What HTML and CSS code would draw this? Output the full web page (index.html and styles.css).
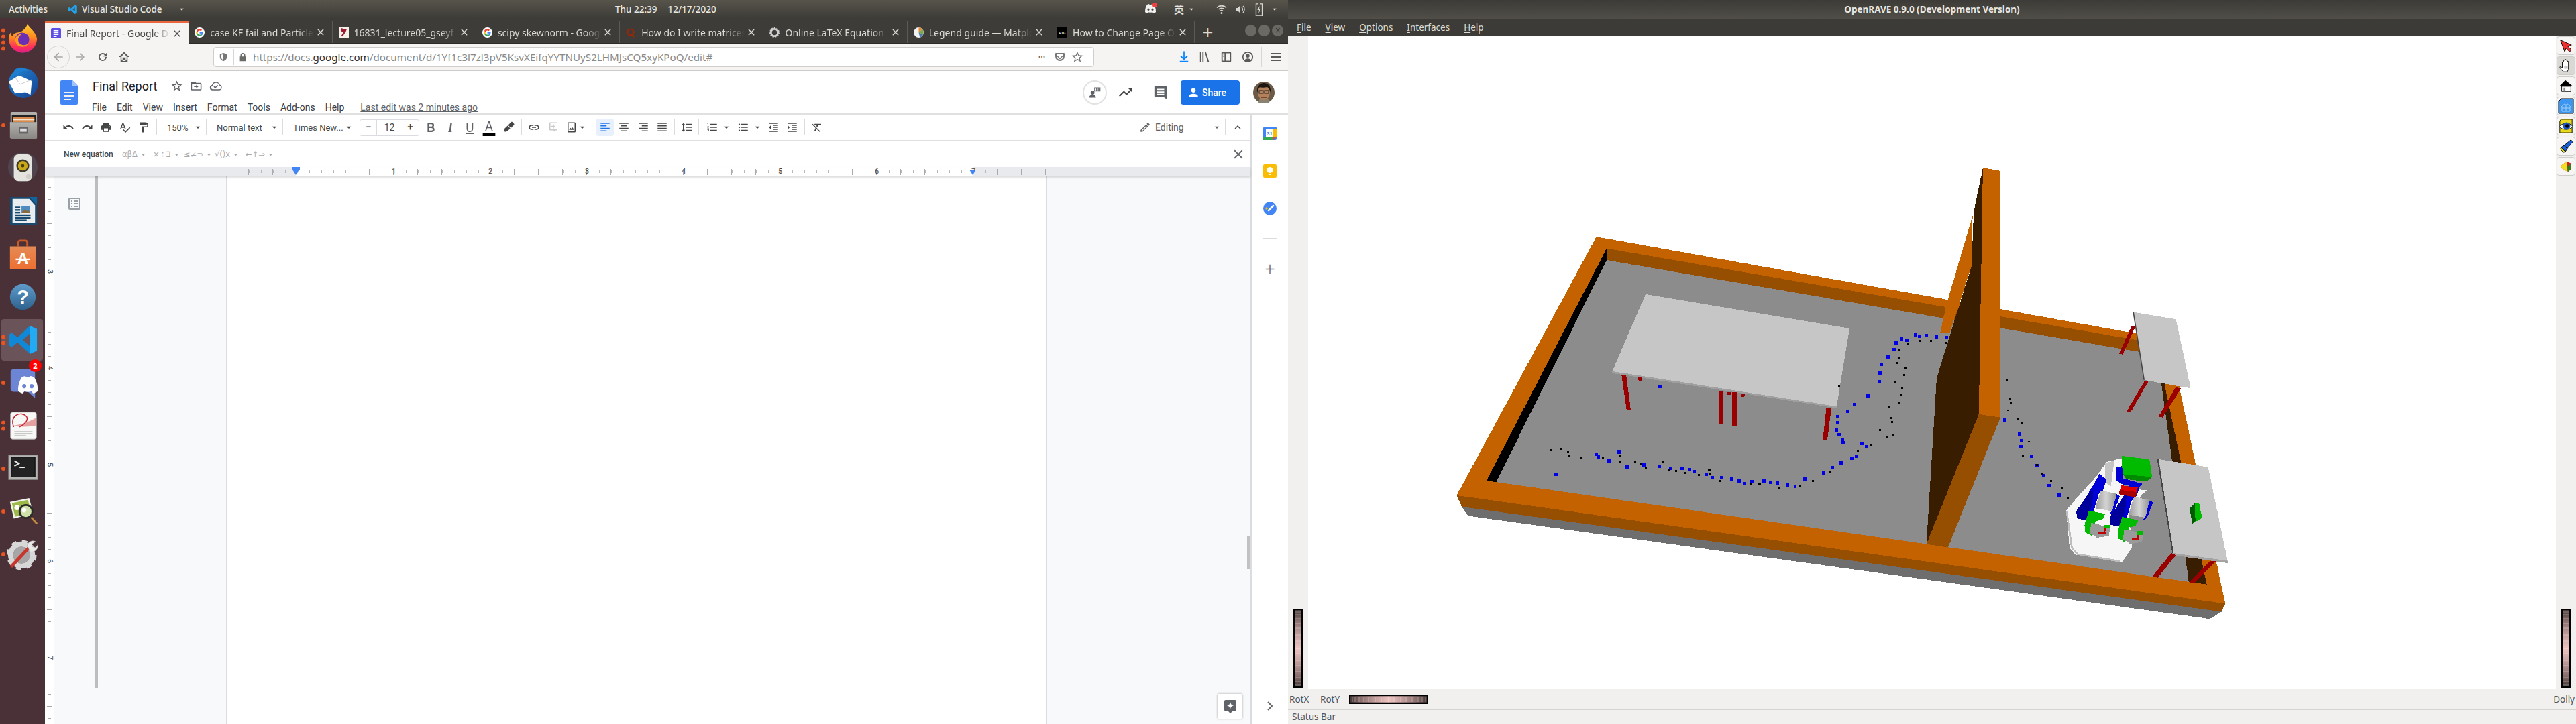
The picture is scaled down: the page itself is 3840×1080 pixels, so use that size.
FILE: index.html
```html
<!DOCTYPE html>
<html lang="en">
<head>
<meta charset="utf-8">
<title>Desktop</title>
<link rel="stylesheet" href="styles.css">
</head>
<body>
<svg class="defs" aria-hidden="true">
  <defs>
    <linearGradient id="wg" x1="0" y1="0" x2="0" y2="1"><stop offset="0" stop-color="#463836"/><stop offset=".14" stop-color="#8a6f6d"/><stop offset=".32" stop-color="#c29e9c"/><stop offset=".5" stop-color="#eec4c1"/><stop offset=".68" stop-color="#c29e9c"/><stop offset=".86" stop-color="#8a6f6d"/><stop offset="1" stop-color="#463836"/></linearGradient>
    <linearGradient id="ffg" x1="0" y1="0" x2="0" y2="1"><stop offset="0" stop-color="#ffd22e"/><stop offset=".45" stop-color="#ff8a1f"/><stop offset=".8" stop-color="#ff2f5c"/><stop offset="1" stop-color="#d81f8a"/></linearGradient>
    <linearGradient id="tbg" x1="0" y1="0" x2="1" y2="1"><stop offset="0" stop-color="#1f8ad8"/><stop offset="1" stop-color="#173f8f"/></linearGradient>
    <linearGradient id="cab" x1="0" y1="0" x2="0" y2="1"><stop offset="0" stop-color="#b4b2ae"/><stop offset="1" stop-color="#8a8885"/></linearGradient>
    <linearGradient id="bag" x1="0" y1="0" x2="0" y2="1"><stop offset="0" stop-color="#e58a55"/><stop offset="1" stop-color="#ed6f30"/></linearGradient>
    <linearGradient id="hlp" x1="0" y1="0" x2="0" y2="1"><stop offset="0" stop-color="#5f9ac9"/><stop offset="1" stop-color="#2d628e"/></linearGradient>
    <linearGradient id="cyl" x1="0" y1="0" x2="1" y2="0"><stop offset="0" stop-color="#9a9a9a"/><stop offset=".5" stop-color="#d4d4d4"/><stop offset="1" stop-color="#8f8f8f"/></linearGradient>
    <symbol id="x" viewBox="0 0 24 24"><path d="M19 6.41L17.59 5 12 10.59 6.41 5 5 6.41 10.59 12 5 17.59 6.41 19 12 13.41 17.59 19 19 17.59 13.41 12z"/></symbol>
    <symbol id="caret" viewBox="0 0 24 24"><path d="M7 10l5 5 5-5z"/></symbol>
    <symbol id="undo" viewBox="0 0 24 24"><path d="M12.5 8c-2.65 0-5.05.99-6.9 2.6L2 7v9h9l-3.62-3.62c1.39-1.16 3.16-1.88 5.12-1.88 3.54 0 6.55 2.31 7.6 5.5l2.37-.78C21.08 11.03 17.15 8 12.5 8z"/></symbol>
    <symbol id="redo" viewBox="0 0 24 24"><path d="M18.4 10.6C16.55 8.99 14.15 8 11.5 8c-4.65 0-8.58 3.03-9.96 7.22L3.9 16c1.05-3.19 4.05-5.5 7.6-5.5 1.95 0 3.73.72 5.12 1.88L13 16h9V7l-3.6 3.6z"/></symbol>
    <symbol id="print" viewBox="0 0 24 24"><path d="M19 8H5c-1.66 0-3 1.34-3 3v6h4v4h12v-4h4v-6c0-1.66-1.34-3-3-3zm-3 11H8v-5h8v5zm3-7c-.55 0-1-.45-1-1s.45-1 1-1 1 .45 1 1-.45 1-1 1zm-1-9H6v4h12V3z"/></symbol>
    <symbol id="spell" viewBox="0 0 24 24"><path d="M12.45 16h2.09L9.43 3H7.57L2.46 16h2.09l1.12-3h5.64l1.14 3zm-6.02-5L8.5 5.48 10.57 11H6.43zm15.16.59l-8.09 8.09L9.83 16l-1.41 1.41 5.09 5.09L23 13l-1.41-1.41z"/></symbol>
    <symbol id="paint" viewBox="0 0 24 24"><path d="M18 4V3c0-.55-.45-1-1-1H5c-.55 0-1 .45-1 1v4c0 .55.45 1 1 1h12c.55 0 1-.45 1-1V6h1v4H9v11c0 .55.45 1 1 1h2c.55 0 1-.45 1-1v-9h8V4h-3z"/></symbol>
    <symbol id="hl" viewBox="0 0 24 24"><path d="M18.500 1.150c-.53 0-1.040.19-1.430.58l-5.810 5.820 5.650 5.650 5.820-5.810c.77-.78.77-2.040 0-2.830l-2.840-2.830c-.39-.39-.89-.58-1.390-.58zM10.300 8.500l-5.960 5.960c-.39.39-.39 1.020 0 1.410L1.500 19.500 7 21l1.150-1.140c.39.39 1.020.39 1.410 0l5.960-5.960z"/></symbol>
    <symbol id="link" viewBox="0 0 24 24"><path d="M3.9 12c0-1.71 1.39-3.1 3.1-3.1h4V7H7c-2.76 0-5 2.24-5 5s2.24 5 5 5h4v-1.9H7c-1.71 0-3.1-1.39-3.1-3.1zM8 13h8v-2H8v2zm9-6h-4v1.9h4c1.71 0 3.1 1.39 3.1 3.1s-1.39 3.1-3.1 3.1h-4V17h4c2.76 0 5-2.24 5-5s-2.24-5-5-5z"/></symbol>
    <symbol id="addc" viewBox="0 0 24 24"><path d="M5 2h14a1 1 0 011 1v14a1 1 0 01-1 1h-3v4l-4-4H5a1 1 0 01-1-1V3a1 1 0 011-1zm1 2v12h14V4zm5 2h2v3h3v2h-3v3h-2v-3H8V9h3z" fill-rule="evenodd"/></symbol>
    <symbol id="image" viewBox="0 0 24 24"><path d="M6 2h12a2 2 0 012 2v16a2 2 0 01-2 2H6a2 2 0 01-2-2V4a2 2 0 012-2zm0 2v16h12V4zm1 13l3-4 2 2 2-3 3 5z" fill-rule="evenodd"/></symbol>
    <symbol id="al" viewBox="0 0 24 24"><path d="M3 3h18v2H3zM3 8h12v2H3zM3 13h18v2H3zM3 18h12v2H3z"/></symbol>
    <symbol id="ac" viewBox="0 0 24 24"><path d="M3 3h18v2H3zM6 8h12v2H6zM3 13h18v2H3zM6 18h12v2H6z"/></symbol>
    <symbol id="ar" viewBox="0 0 24 24"><path d="M3 3h18v2H3zM9 8h12v2H9zM3 13h18v2H3zM9 18h12v2H9z"/></symbol>
    <symbol id="aj" viewBox="0 0 24 24"><path d="M3 3h18v2H3zM3 8h18v2H3zM3 13h18v2H3zM3 18h18v2H3z"/></symbol>
    <symbol id="ls" viewBox="0 0 24 24"><path d="M6 7h2.5L5 3.5 1.5 7H4v10H1.5L5 20.5 8.5 17H6V7zm4-2v2h12V5H10zm0 14h12v-2H10v2zm0-6h12v-2H10v2z"/></symbol>
    <symbol id="nl" viewBox="0 0 24 24"><path d="M2 17h2v.5H3v1h1v.5H2v1h3v-4H2v1zm1-9h1V4H2v1h1v3zm-1 3h1.8L2 13.1v.9h3v-1H3.2L5 10.9V10H2v1zm5-6v2h14V5H7zm0 14h14v-2H7v2zm0-6h14v-2H7v2z"/></symbol>
    <symbol id="bl" viewBox="0 0 24 24"><path d="M4 10.5c-.83 0-1.5.67-1.5 1.5s.67 1.5 1.5 1.5 1.5-.67 1.5-1.5-.67-1.5-1.5-1.5zm0-6c-.83 0-1.5.67-1.5 1.5S3.17 7.5 4 7.5 5.5 6.83 5.5 6 4.83 4.5 4 4.5zm0 12c-.83 0-1.5.68-1.5 1.5s.68 1.5 1.5 1.5 1.5-.68 1.5-1.5-.67-1.5-1.5-1.5zM7 19h14v-2H7v2zm0-6h14v-2H7v2zm0-8v2h14V5H7z"/></symbol>
    <symbol id="ind" viewBox="0 0 24 24"><path d="M11 17h10v-2H11v2zm-8-5l4 4V8l-4 4zm0 9h18v-2H3v2zM3 3v2h18V3H3zm8 6h10V7H11v2zm0 4h10v-2H11v2z"/></symbol>
    <symbol id="inc" viewBox="0 0 24 24"><path d="M3 21h18v-2H3v2zM3 8v8l4-4-4-4zm8 9h10v-2H11v2zM3 3v2h18V3H3zm8 6h10V7H11v2zm0 4h10v-2H11v2z"/></symbol>
    <symbol id="clr" viewBox="0 0 24 24"><path d="M3.27 5L2 6.27l6.97 6.97L6.5 19h3l1.57-3.66L16.73 21 18 19.73 3.55 5.27 3.27 5zM6 5v.18L8.82 8h2.4l-.72 1.68 2.1 2.1L14.21 8H20V5H6z"/></symbol>
    <symbol id="pencil" viewBox="0 0 24 24"><path d="M3 17.25V21h3.75L17.81 9.94l-3.75-3.75L3 17.25zm2.1 2v-1.1l9-9 1.1 1.1-9 9zM20.71 7.04c.39-.39.39-1.02 0-1.41l-2.34-2.34c-.39-.39-1.02-.39-1.41 0l-1.83 1.83 3.75 3.75 1.83-1.83z" fill-rule="evenodd"/></symbol>
    <symbol id="up" viewBox="0 0 24 24"><path d="M12 8l-6 6 1.41 1.41L12 10.83l4.59 4.58L18 14z"/></symbol>
    <symbol id="star" viewBox="0 0 24 24"><path d="M22 9.24l-7.19-.62L12 2 9.19 8.63 2 9.24l5.46 4.73L5.82 21 12 17.27 18.18 21l-1.63-7.03L22 9.24zM12 15.4l-3.76 2.27 1-4.28-3.32-2.88 4.38-.38L12 6.1l1.71 4.04 4.38.38-3.32 2.88 1 4.28L12 15.4z"/></symbol>
    <symbol id="person" viewBox="0 0 24 24"><path d="M12 12c2.21 0 4-1.79 4-4s-1.79-4-4-4-4 1.79-4 4 1.79 4 4 4zm0 2c-2.67 0-8 1.34-8 4v2h16v-2c0-2.66-5.33-4-8-4z"/></symbol>
    <symbol id="trend" viewBox="0 0 24 24"><path d="M16 6l2.29 2.29-4.88 4.88-4-4L2 16.59 3.41 18l6-6 4 4 6.3-6.29L22 12V6z"/></symbol>
    <symbol id="google" viewBox="0 0 24 24"><circle cx="12" cy="12" r="12" fill="#fff"/><path d="M12 7.2a4.8 4.8 0 013.3 1.3l2.5-2.5A8.3 8.3 0 0012 3.7a8.3 8.3 0 00-7.4 4.6l2.9 2.2A5 5 0 0112 7.2z" fill="#ea4335"/><path d="M4.6 8.3a8.3 8.3 0 000 7.4l2.9-2.2a5 5 0 010-3z" fill="#fbbc05"/><path d="M12 20.3a8 8 0 005.5-2l-2.7-2.1a5 5 0 01-7.3-2.7l-2.9 2.2a8.3 8.3 0 007.4 4.6z" fill="#34a853"/><path d="M20.1 10.5H12v3.4h4.7a4 4 0 01-1.9 2.3l2.7 2.1c1.6-1.5 2.8-4.400 2.600-7.800z" fill="#4285f4"/></symbol>
    <symbol id="discord" viewBox="0 0 24 24"><path d="M7 5c2-1 3-1 3-1l.5 1h3L14 4s1 0 3 1c2 3 3 6 3 11-1.500 1.500-3.500 2-4 2l-1-1.500c1-.3 1.500-.8 1.500-.8-2.500 1.500-6.500 1.500-9 0 0 0 .5.500 1.500.8L8 18c-.5 0-2.500-.5-4-2 0-5 1-8 3-11zm2 5.500a1.600 1.700 0 100 3.400 1.600 1.700 0 000-3.400zm6 0a1.600 1.700 0 100 3.400 1.600 1.700 0 000-3.400z" fill-rule="evenodd"/></symbol>
    <symbol id="wheel" viewBox="0 0 14 118" preserveAspectRatio="none"><rect width="14" height="118" fill="#000"/><rect x="2" y="2" width="10" height="114" fill="url(#wg)"/><path d="M3 5h8M3 9h8M3 15h8M3 22h8M3 29h8M3 39h8M3 48h8M3 59h8M3 67h8M3 77h8M3 85h8M3 94h8M3 103h8M3 109h8M3 114h8" stroke="#fff" stroke-opacity=".35" stroke-width="1" fill="none"/><path d="M2.500 2v114M11.500 2v114" stroke="#000" stroke-opacity=".25" fill="none"/></symbol>
  </defs>
</svg>

<section class="screen">
  <header class="panel">
    <span class="p-activities">Activities</span>
    <svg class="p-vs" viewBox="0 0 24 24"><path d="M17 1l5 2.500v17L17 23 7.500 14 3.500 17 1.500 16v-8l2-1 4 3L17 1zm0 6.500L11.500 12l5.500 4.500z" fill="#23a3ee" fill-rule="evenodd"/></svg>
    <span class="p-app">Visual Studio Code</span>
    <svg class="ic14 p-c"><use href="#caret"/></svg>
    <span class="p-clock">Thu 22:39</span>
    <span class="p-date">12/17/2020</span>
    <span class="p-discord"><svg class="ic24"><use href="#discord"/></svg><i class="p-red"></i></span>
    <span class="p-ime">英</span>
    <svg class="ic14 p-c"><use href="#caret"/></svg>
    <svg class="p-tray p-wifi" viewBox="0 0 16 16"><path d="M1 5.500a10 10 0 0114 0M3.500 8a6.500 6.500 0 019 0M6 10.500a3 3 0 014 0" fill="none" stroke="currentColor" stroke-width="1.600"/><circle cx="8" cy="13.500" r="1.500" fill="currentColor"/></svg>
    <svg class="p-tray p-vol" viewBox="0 0 16 16"><path d="M1 6h3l4-4v12l-4-4H1z" fill="currentColor"/><path d="M10 5a4 4 0 010 6M12 3a7 7 0 010 10" fill="none" stroke="currentColor" stroke-width="1.400"/></svg>
    <svg class="p-tray p-bat" viewBox="0 0 16 22"><path d="M6 0h4v2h3v20H3V2h3z" fill="none" stroke="currentColor" stroke-width="1.500"/><path d="M9 5l-4 7h3l-1 6 4-8H8z" fill="currentColor"/></svg>
    <svg class="ic14 p-c"><use href="#caret"/></svg>
  </header>

  <div class="desk">
    <nav class="dock">
      <div class="app"><i class="dots"><b></b><b></b><b></b><b></b></i>
        <svg viewBox="0 0 48 48"><path d="M31 0c3 6 12 10 15 22a22 22 0 11-44 1c0-3 1-7 3-10 0 3 2 5 3 6 2-6 8-6 13-7 3-2 9-6 10-12z" fill="url(#ffg)"/><circle cx="23" cy="24" r="11" fill="#6a2fb5"/><path d="M12 22c3-5 7-7 13-8-6 3-9 7-8 12 1 6 10 9 16 4-5 7-13 6-18 2-2-2-3-6-3-10z" fill="#ff9c1f"/></svg></div>
      <div class="app"><svg viewBox="0 0 48 48"><circle cx="25" cy="25" r="23" fill="url(#tbg)"/><path d="M12 4c6-5 16-4 21 3-6-2-13-1-16 5l-7 1c-1-3 0-7 2-9z" fill="#1c7fd1"/><path d="M2 23l16-10 20 9-2 21-8-4-16 2z" fill="#fff"/><path d="M12 16l8 11 17-7" fill="none" stroke="#c9c9c9"/></svg></div>
      <div class="app"><i class="dots"><b></b></i>
        <svg viewBox="0 0 48 48"><rect x="5" y="3" width="41" height="42" rx="2" fill="url(#cab)"/><rect x="7" y="8" width="37" height="16" fill="#222"/><rect x="9" y="11" width="33" height="8" fill="#d9894c"/><rect x="9" y="14" width="33" height="2" fill="#f4e6d3"/><rect x="4" y="19" width="42" height="25" fill="url(#cab)"/><rect x="18" y="27" width="14" height="10" rx="1" fill="#666"/><rect x="20" y="29" width="10" height="5" fill="#ddd"/></svg></div>
      <div class="app"><svg viewBox="0 0 48 48"><circle cx="24" cy="22" r="23" fill="#5b6a7d" opacity=".35"/><rect x="10" y="2" width="28" height="42" rx="7" fill="#e4e3dd"/><circle cx="24" cy="20" r="10" fill="#3d3a2c"/><circle cx="24" cy="20" r="7.500" fill="#c9a818"/><circle cx="24" cy="20" r="2.500" fill="#4a3f10"/><circle cx="33" cy="37" r="4" fill="#cfcfc8"/></svg></div>
      <div class="app"><svg viewBox="0 0 48 48"><path d="M6 2h29l11 11v31a2 2 0 01-2 2H6a2 2 0 01-2-2V4a2 2 0 012-2z" fill="#184a6f"/><path d="M8 5h26l9 10v27H8z" fill="#e9edef"/><path d="M34 2h12v12z" fill="#0e66a0"/><rect x="12" y="17" width="8" height="2.500" fill="#184a6f"/><rect x="12" y="21" width="8" height="2.500" fill="#184a6f"/><rect x="12" y="25" width="8" height="2.500" fill="#184a6f"/><rect x="22" y="16" width="13" height="10" fill="#4d8bc0"/><path d="M22 26l5-5 3 3 2-2 3 4z" fill="#8a6a3a"/><rect x="12" y="29" width="24" height="2.500" fill="#184a6f"/><rect x="12" y="33" width="24" height="2.500" fill="#184a6f"/><rect x="12" y="37" width="18" height="2.500" fill="#184a6f"/></svg></div>
      <div class="app"><svg viewBox="0 0 48 48"><path d="M17 12V6a3 3 0 013-3h8a3 3 0 013 3v6" fill="none" stroke="#c95a26" stroke-width="3"/><path d="M4 12h40v36H4z" fill="url(#bag)"/><text x="24" y="40" class="ap-a">A</text><rect x="13" y="31" width="22" height="2.500" fill="#fff"/></svg></div>
      <div class="app"><svg viewBox="0 0 48 48"><circle cx="24" cy="24" r="20" fill="url(#hlp)"/><text x="24" y="34" class="ap-q">?</text></svg></div>
      <div class="app app-on"><i class="dots"><b></b><b></b></i>
        <svg viewBox="0 0 48 48"><path d="M36 2l11 5v34l-11 5L17 28 8 35l-4-2V15l4-2 9 7zM36 14L25 24l11 10z" fill="#0f88d8" fill-rule="evenodd"/><path d="M36 2l11 5v34l-11 5z" fill="#22aaf5"/></svg></div>
      <div class="app"><i class="dots"><b></b></i>
        <svg viewBox="0 0 48 48"><path d="M9 3h30a4 4 0 014 4v41l-11-10H9a4 4 0 01-4-4V7a4 4 0 014-4z" fill="#6d85d5"/><svg x="9" y="6" width="32" height="32" class="ap-w"><use href="#discord"/></svg></svg><b class="badge">2</b></div>
      <div class="app"><i class="dots"><b></b><b></b></i>
        <svg viewBox="0 0 48 48"><rect x="5" y="3" width="40" height="42" rx="3" fill="#f7f7f6" stroke="#bbb"/><path d="M8 24c10-1 24-5 36-12v12c-10 2-26 2-36 0z" fill="#e5a0a0"/><path d="M10 26C2 8 22 0 30 10c3 5-3 12-11 16" fill="none" stroke="#c8202a" stroke-width="1.500"/><path d="M11 33h28M11 36h28M11 39h18" stroke="#c4c4c4"/></svg></div>
      <div class="app"><i class="dots"><b></b></i>
        <svg viewBox="0 0 48 48"><rect x="2" y="3" width="45" height="38" fill="#b5b5b3" stroke="#8c8c8a"/><rect x="6" y="6" width="37" height="31" fill="#222" stroke="#000"/><path d="M11 12l7 4-7 4" fill="none" stroke="#eee" stroke-width="2"/><rect x="19" y="21" width="8" height="2" fill="#eee"/></svg></div>
      <div class="app"><i class="dots"><b></b></i>
        <svg viewBox="0 0 48 48"><path d="M4 9l30-6 6 24-30 8z" fill="#f4f4ee"/><path d="M7 11l25-5 5 20-25 6z" fill="#9cb94a"/><circle cx="15" cy="18" r="4" fill="#fff"/><circle cx="29" cy="24" r="10" fill="#cfe0a8" stroke="#2b2b2b" stroke-width="3"/><circle cx="26" cy="22" r="3.500" fill="#fff"/><path d="M37 33l9 10" stroke="#c28a3e" stroke-width="3"/></svg></div>
      <div class="app"><i class="dots"><b></b></i>
        <svg viewBox="0 0 48 48"><circle cx="22" cy="25" r="13" fill="#a6a6a6"/><circle cx="22" cy="25" r="17" fill="none" stroke="#d7d7d7" stroke-width="8"/><circle cx="22" cy="25" r="21" fill="none" stroke="#d7d7d7" stroke-width="5" stroke-dasharray="8 8.500"/><path d="M7 42l26-28" stroke="#c9362c" stroke-width="5" stroke-linecap="round"/><path d="M31 10c1-6 8-9 13-6l-6 4 1 4 5 1 3-4c2 6-5 13-12 11z" fill="#e8e8e8" stroke="#888" stroke-width=".5"/></svg></div>
    </nav>

    <main class="ff">
      <div class="tabs">
        <div class="tab tab-on"><svg class="fav" viewBox="0 0 16 16"><rect width="16" height="16" rx="2" fill="#5b4fe8"/><path d="M4 4h8M4 7h8M4 10h8M4 13h5" stroke="#fff" stroke-width="1.500"/></svg><span class="t">Final Report - Google D</span><svg class="cl"><use href="#x"/></svg></div>
        <div class="tab"><svg class="fav"><use href="#google"/></svg><span class="t">case KF fail and Particle</span><svg class="cl"><use href="#x"/></svg></div>
        <div class="tab"><svg class="fav" viewBox="0 0 16 16"><rect width="16" height="16" fill="#f4f1ea"/><path d="M4 1l6 2 3-1-2 5-5 7-2-1 3-5-4-3z" fill="#9e1b32"/></svg><span class="t">16831_lecture05_gseyf</span><svg class="cl"><use href="#x"/></svg></div>
        <div class="tab"><svg class="fav"><use href="#google"/></svg><span class="t">scipy skewnorm - Googl</span><svg class="cl"><use href="#x"/></svg></div>
        <div class="tab"><svg class="fav" viewBox="0 0 16 16"><circle cx="7.500" cy="7.500" r="5" fill="none" stroke="#a82400" stroke-width="2"/><path d="M9 10l4 5" stroke="#a82400" stroke-width="2"/></svg><span class="t">How do I write matrices</span><svg class="cl"><use href="#x"/></svg></div>
        <div class="tab"><svg class="fav" viewBox="0 0 16 16"><circle cx="8" cy="8" r="5.500" fill="none" stroke="#cfcfcf" stroke-width="3"/><circle cx="8" cy="8" r="7" fill="none" stroke="#cfcfcf" stroke-width="2" stroke-dasharray="2 2"/></svg><span class="t">Online LaTeX Equation</span><svg class="cl"><use href="#x"/></svg></div>
        <div class="tab"><svg class="fav" viewBox="0 0 16 16"><circle cx="8" cy="8" r="8" fill="#f2f2f2"/><path d="M8 8V0a8 8 0 016 3z" fill="#e08a3c"/><path d="M8 8l6-5a8 8 0 011 8z" fill="#7aa84c"/><path d="M8 8l7 3a8 8 0 01-5 5z" fill="#4c7ab0"/></svg><span class="t">Legend guide — Matplo</span><svg class="cl"><use href="#x"/></svg></div>
        <div class="tab"><svg class="fav" viewBox="0 0 16 16"><rect width="16" height="16" fill="#000"/><text x="8" y="11" class="fav-t">HTG</text></svg><span class="t">How to Change Page O</span><svg class="cl"><use href="#x"/></svg></div>
        <span class="newtab">+</span>
        <span class="wbtns"><i class="wb"></i><i class="wb wb-m"></i><i class="wb wb-x"><svg><use href="#x"/></svg></i></span>
      </div>

      <div class="navbar">
        <span class="back"><svg viewBox="0 0 24 24"><path d="M20 11H7.800l5.600-5.600L12 4l-8 8 8 8 1.400-1.400L7.800 13H20z"/></svg></span>
        <svg class="nb nb-fw" viewBox="0 0 24 24"><path d="M4 11h12.200l-5.600-5.600L12 4l8 8-8 8-1.400-1.400 5.600-5.600H4z"/></svg>
        <svg class="nb nb-rl" viewBox="0 0 24 24"><path d="M12 4a8 8 0 108 8h-2.500A5.500 5.500 0 1112 6.500c1.600 0 3 .7 4 1.800L13 11h8V3l-3.200 3.100A8 8 0 0012 4z"/></svg>
        <svg class="nb nb-hm" viewBox="0 0 24 24"><path d="M12 2L1.500 12H5v10h14V12h3.500zM9 20v-7h6v7zM7 18v-7.500l5-5 5 5V18" fill-rule="evenodd"/></svg>
        <div class="url">
          <svg class="u-sh" viewBox="0 0 16 16"><path d="M8 1l6 2v5c0 4-3 6-6 7-3-1-6-3-6-7V3zm0 2L4 4.300V8c0 2.500 2 4 4 5z" fill-rule="evenodd"/></svg>
          <i class="u-sep"></i>
          <svg class="u-lk" viewBox="0 0 16 16"><path d="M4 7V5a4 4 0 018 0v2h1v8H3V7zm2 0h4V5a2 2 0 00-4 0z" fill-rule="evenodd"/></svg>
          <span class="u-t">https://docs.<b>google.com</b>/document/d/1Yf1c3l7zl3pV5KsvXEifqYYTNUyS2LHMJsCQ5xyKPoQ/edit#</span>
          <span class="u-dots">•••</span>
          <svg class="u-pk" viewBox="0 0 16 16"><path d="M2 2h12a1 1 0 011 1v4a7 7 0 01-14 0V3a1 1 0 011-1zm1 2v3a5 5 0 0010 0V4zm1.500 2L8 9.500 11.500 6l1 1L8 11.500 3.500 7z" fill-rule="evenodd"/></svg>
          <svg class="u-st"><use href="#star"/></svg>
        </div>
        <svg class="nb-dl" viewBox="0 0 18 20"><path d="M8 1h2v11l4-4 1.400 1.400L9 15.800 2.600 9.400 4 8l4 4zM2 17h14v2H2z"/></svg>
        <svg class="nb2" viewBox="0 0 20 20"><path d="M2 2h2v16H2zM6 2h2v16H6zM10 2l2-.5L17 18l-2 .5z"/></svg>
        <svg class="nb2" viewBox="0 0 20 20"><path d="M3 2h14a1 1 0 011 1v14a1 1 0 01-1 1H3a1 1 0 01-1-1V3a1 1 0 011-1zm1 2v12h3V4zm5 0v12h7V4zM5 6h1v1H5zm0 3h1v1H5z" fill-rule="evenodd"/></svg>
        <svg class="nb2" viewBox="0 0 20 20"><path d="M10 1a9 9 0 110 18 9 9 0 010-18zm0 2a7 7 0 00-5 11.900c1-1.500 3-2.400 5-2.400s4 .9 5 2.400A7 7 0 0010 3zm0 2a3 3 0 110 6 3 3 0 010-6z" fill-rule="evenodd"/></svg>
        <i class="nb-sep"></i>
        <svg class="nb-mn" viewBox="0 0 14 14"><path d="M0 1h14v2H0zM0 6h14v2H0zM0 11h14v2H0z"/></svg>
      </div>

      <div class="docs">
        <div class="dhead">
          <svg class="dlogo" viewBox="0 0 26 36"><path d="M2 0h16l8 8v26a2 2 0 01-2 2H2a2 2 0 01-2-2V2a2 2 0 012-2z" fill="#4285f4"/><path d="M18 0l8 8h-8z" fill="#a1c2fa"/><path d="M6 17h14v2H6zM6 22h14v2H6zM6 27h10v2H6z" fill="#f1f1f1"/></svg>
          <div class="dinfo">
            <div class="dtitle"><span class="dname">Final Report</span>
              <svg class="dt-i"><use href="#star"/></svg>
              <svg class="dt-i" viewBox="0 0 24 24"><path d="M4 4h6l2 2h8a2 2 0 012 2v10a2 2 0 01-2 2H4a2 2 0 01-2-2V6a2 2 0 012-2zm0 4v10h16V8zm8 1.500L16 13l-4 3.500V14H8v-2h4z" fill-rule="evenodd"/></svg>
              <svg class="dt-i" viewBox="0 0 24 24"><path d="M12 4a8 8 0 017.500 5.300A5.500 5.500 0 0119 20H6a5 5 0 01-1-9.900A8 8 0 0112 4zm0 2a6 6 0 00-5.500 5.700 3.200 3.200 0 00-.5 6.300h12.500a3.500 3.500 0 00.5-7 6 6 0 00-7-5zm3.500 4l1.300 1.300L11 16.500 8 13.500l1.300-1.300 1.700 1.700z" fill-rule="evenodd"/></svg>
            </div>
            <div class="dmenu"><span>File</span><span>Edit</span><span>View</span><span>Insert</span><span>Format</span><span>Tools</span><span>Add-ons</span><span>Help</span><a class="dlast">Last edit was 2 minutes ago</a></div>
          </div>
          <div class="dright">
            <span class="dpres"><svg viewBox="0 0 24 24"><circle cx="8" cy="12" r="3.500"/><path d="M2 21c0-3.500 3-5 6-5s6 1.500 6 5zM11 3h11v7H11zM13 5v3h1.500V5zm3 0v3h1.500V5zm3 0v3h1.500V5z" fill-rule="evenodd"/></svg></span>
            <svg class="d-tr"><use href="#trend"/></svg>
            <svg class="d-cm" viewBox="0 0 24 24"><path d="M3 2h18a1 1 0 011 1v20l-5-4H3a1 1 0 01-1-1V3a1 1 0 011-1zm3 4v2h12V6zm0 4v2h12v-2zm0 4v2h12v-2z" fill-rule="evenodd"/></svg>
            <span class="share"><svg><use href="#person"/></svg>Share</span>
            <svg class="avatar" viewBox="0 0 32 32"><circle cx="16" cy="16" r="16" fill="#6b5a48"/><path d="M8 32c0-6 3-9 8-9s8 3 8 9z" fill="#8a8270"/><ellipse cx="16" cy="16" rx="9" ry="11" fill="#b3805c"/><path d="M6 16c-1-9 4-14 10-14s11 5 10 14c-1-4-3-7-5-8-4 1-9 1-11 0-2 2-3 4-4 8z" fill="#1d1712"/><rect x="9" y="13" width="6" height="4" fill="none" stroke="#222"/><rect x="17" y="13" width="6" height="4" fill="none" stroke="#222"/><path d="M12 23h8" stroke="#5a3a2a" stroke-width="1.500"/></svg>
          </div>
        </div>
        <div class="dbody">
          <div class="dmain">
            <div class="tb">
              <span class="tb-btn"><svg><use href="#undo"/></svg></span>
              <span class="tb-btn"><svg><use href="#redo"/></svg></span>
              <span class="tb-btn"><svg><use href="#print"/></svg></span>
              <span class="tb-btn"><svg><use href="#spell"/></svg></span>
              <span class="tb-btn"><svg><use href="#paint"/></svg></span>
              <i class="sep sep-a"></i>
              <span class="sel sel-z">150%<svg><use href="#caret"/></svg></span>
              <i class="sep"></i>
              <span class="sel sel-s">Normal text<svg><use href="#caret"/></svg></span>
              <i class="sep"></i>
              <span class="sel sel-f">Times New...<svg><use href="#caret"/></svg></span>
              <span class="fsize"><b>−</b><em>12</em><b>+</b></span>
              <span class="tb-l tb-b">B</span>
              <span class="tb-l tb-i">I</span>
              <span class="tb-l tb-u">U</span>
              <span class="tb-l tb-c">A</span>
              <span class="tb-btn2"><svg><use href="#hl"/></svg></span>
              <i class="sep sep-a"></i>
              <span class="tb-btn2 ml3"><svg><use href="#link"/></svg></span>
              <span class="tb-btn2 tb-mute"><svg><use href="#addc"/></svg></span>
              <span class="tb-img"><svg><use href="#image"/></svg><svg class="cr"><use href="#caret"/></svg></span>
              <i class="sep"></i>
              <span class="tb-on"><svg><use href="#al"/></svg></span>
              <span class="tb-btn2"><svg><use href="#ac"/></svg></span>
              <span class="tb-btn2"><svg><use href="#ar"/></svg></span>
              <span class="tb-btn2 tb-n"><svg><use href="#aj"/></svg></span>
              <i class="sep"></i>
              <span class="tb-btn3"><svg><use href="#ls"/></svg></span>
              <i class="sep"></i>
              <span class="tb-lst"><svg><use href="#nl"/></svg><svg class="cr"><use href="#caret"/></svg></span>
              <span class="tb-lst"><svg><use href="#bl"/></svg><svg class="cr"><use href="#caret"/></svg></span>
              <span class="tb-btn2 tb-n"><svg><use href="#ind"/></svg></span>
              <span class="tb-btn2 tb-n"><svg><use href="#inc"/></svg></span>
              <i class="sep"></i>
              <span class="tb-btn3"><svg><use href="#clr"/></svg></span>
              <span class="mode"><svg><use href="#pencil"/></svg><span>Editing</span><svg class="cr"><use href="#caret"/></svg></span>
              <i class="sep"></i>
              <span class="tb-btn3 tb-up"><svg><use href="#up"/></svg></span>
            </div>
            <div class="eq">
              <span class="eq-new">New equation</span>
              <span class="eq-g">αβΔ<svg><use href="#caret"/></svg></span>
              <span class="eq-g">×÷∃<svg><use href="#caret"/></svg></span>
              <span class="eq-g">≤≠⊃<svg><use href="#caret"/></svg></span>
              <span class="eq-g">√()x<svg><use href="#caret"/></svg></span>
              <span class="eq-g">←↑⇒<svg><use href="#caret"/></svg></span>
              <svg class="eq-x"><use href="#x"/></svg>
            </div>
            <div class="ruler">
              <div class="r-ticks"></div>
              <div class="r-nums"><span>1</span><span>2</span><span>3</span><span>4</span><span>5</span><span>6</span><span>7</span></div>
              <i class="r-m r-m1"></i><i class="r-m r-m2"></i>
            </div>
            <div class="work">
              <div class="vr"><span>3</span><span>4</span><span>5</span><span>6</span><span>7</span></div>
              <div class="outline"><svg viewBox="0 0 18 18"><path d="M2 0h14a2 2 0 012 2v14a2 2 0 01-2 2H2a2 2 0 01-2-2V2a2 2 0 012-2zm0 2v14h14V2zm2 2h2v2H4zm4 0h6v2H8zm-4 4h2v2H4zm4 0h6v2H8zm-4 4h2v2H4zm4 0h6v2H8z" fill-rule="evenodd"/></svg></div>
              <i class="ogrip"></i>
              <div class="page"></div>
              <i class="sbar"></i>
              <span class="fab"><svg viewBox="0 0 18 20"><path d="M2 0h14a2 2 0 012 2v13a2 2 0 01-2 2h-4l-3 3-3-3H2a2 2 0 01-2-2V2a2 2 0 012-2zm7 3c-.5 3-2 5-5 5.500 3 .5 4.500 2 5 5 .5-3 2-4.500 5-5-3-.5-4.500-2.500-5-5.500z" fill-rule="evenodd"/></svg></span>
            </div>
          </div>
          <aside class="side">
            <svg class="s-i" viewBox="0 0 20 20"><rect width="20" height="20" rx="2" fill="#4285f4"/><rect x="0" y="15" width="15" height="5" fill="#34a853"/><rect x="15" y="4" width="5" height="11" fill="#fbbc04"/><path d="M15 15h5l-5 5z" fill="#ea4335"/><rect x="4" y="4" width="11" height="11" fill="#fff"/><text x="9.500" y="12.500" class="s-31">31</text></svg>
            <svg class="s-i" viewBox="0 0 20 20"><rect width="20" height="20" rx="2" fill="#fbbc04"/><circle cx="10" cy="8.500" r="4.500" fill="#fff"/><rect x="8" y="14.500" width="4" height="1.500" fill="#fff"/></svg>
            <svg class="s-i" viewBox="0 0 20 20"><circle cx="10" cy="10" r="10" fill="#4285f4"/><circle cx="5" cy="10" r="1.700" fill="#fbbc04"/><path d="M8 13l7-7" stroke="#fff" stroke-width="2.500" stroke-linecap="round"/></svg>
            <i class="s-div"></i>
            <span class="s-plus">+</span>
            <svg class="s-ch" viewBox="0 0 10 14"><path d="M2 1l6 6-6 6" fill="none" stroke="#5f6368" stroke-width="2"/></svg>
          </aside>
        </div>
      </div>
    </main>
  </div>
</section>

<section class="rave">
  <div class="r-title">OpenRAVE 0.9.0 (Development Version)</div>
  <div class="r-menu"><span><u>F</u>ile</span><span><u>V</u>iew</span><span><u>O</u>ptions</span><span><u>I</u>nterfaces</span><span><u>H</u>elp</span></div>
  <div class="r-main">
    <div class="r-lp"><svg class="w-v"><use href="#wheel"/></svg></div>
    <div class="view">
      <svg class="scene" viewBox="0 0 1568 1568" preserveAspectRatio="none" shape-rendering="crispEdges">
        <polygon points="25,1147 1505,1470 1482,1492 37,1175" fill="#6e6e6e"/>
        <polygon points="15,1112 1512,1445 1505,1470 25,1147" fill="#964e00"/>
        <polygon points="287,316 1403,632 1512,1445 15,1112" fill="#c46200"/>
        <polygon points="1377,644 1476,1386 1441,1378 1380,680" fill="#381d00"/>
        <polygon points="307,352 1377,644 1380,680 307,388" fill="#964e00"/>
        <polygon points="307,388 1380,680 1441,1378 92,1071" fill="#8c8c8c"/>
        <polygon points="307,352 307,388 92,1071 73,1067" fill="#000"/>
        <g fill="#9b0000">
          <polygon points="336,740 345,740 354,848 346,850"/><polygon points="525,790 534,790 534,890 525,892"/><polygon points="552,795 561,795 560,900 552,900"/><polygon points="735,842 745,842 737,940 728,942"/>
          <polygon points="367,748 376,748 376,758 370,760"/><polygon points="541,793 550,795 550,803 543,803"/><polygon points="568,798 576,800 575,810 569,808"/>
          <polygon points="1330,590 1338,590 1312,678 1305,676"/><polygon points="1354,762 1362,762 1328,855 1320,853"/><polygon points="1415,780 1426,782 1390,872 1382,870"/>
        </g>
        <polygon points="318,730 755,838 755,843 318,736" fill="#a0a0a0"/>
        <polygon points="383,493 780,598 755,838 318,730" fill="#c6c6c6"/>
        <path fill="#0000e6" d="M205 1042h6.500v10h-6.500zM284 980h6.500v10h-6.500zM287 989h6.500v10h-6.500zM308 1001h6.500v10h-6.500zM328 974h6.500v10h-6.500zM344 1019h6.500v10h-6.500zM376 1013h6.500v10h-6.500zM406 1017h6.500v10h-6.500zM428 1024h6.500v10h-6.500zM451 1023h6.500v10h-6.500zM465 1027h6.500v10h-6.500zM474 1034h6.500v10h-6.500zM498 1042h6.500v10h-6.500zM510 1052h6.500v10h-6.500zM528 1052h6.500v10h-6.500zM547 1056h6.500v10h-6.500zM562 1063h6.500v10h-6.500zM573 1071h6.500v10h-6.500zM587 1065h6.500v10h-6.500zM610 1063h6.500v10h-6.500zM623 1066h6.500v10h-6.500zM636 1069h6.500v10h-6.500zM656 1075h6.500v10h-6.500zM671 1080h6.500v10h-6.500zM690 1056h6.500v10h-6.500zM726 1038h6.500v10h-6.500zM744 1022h6.500v10h-6.500zM760 1007h6.500v10h-6.500zM782 993h6.500v10h-6.500zM791 986h6.500v10h-6.500zM801 947h6.500v10h-6.500zM810 957h6.500v10h-6.500zM763 935h6.500v10h-6.500zM764 945h6.500v10h-6.500zM757 920h6.500v10h-6.500zM752 906h6.500v10h-6.500zM754 883h6.500v10h-6.500zM754 864h6.500v10h-6.500zM774 848h6.500v10h-6.500zM787 827h6.500v10h-6.500zM813 800h6.500v10h-6.500zM835 757h6.500v10h-6.500zM836 730h6.500v10h-6.500zM839 704h6.500v10h-6.500zM852 681h6.500v10h-6.500zM864 658h6.500v10h-6.500zM868 638h6.500v10h-6.500zM878 625h6.500v10h-6.500zM889 629h6.500v10h-6.500zM906 613h6.500v10h-6.500zM913 617h6.500v10h-6.500zM927 615h6.500v10h-6.500zM946 619h6.500v10h-6.500zM966 621h6.500v10h-6.500zM408 771h6.500v10h-6.500zM1079 875h6.500v10h-6.500zM1108 918h6.500v10h-6.500zM1112 939h6.500v10h-6.500zM1111 958h6.500v10h-6.500zM1132 986h6.500v10h-6.500zM1142 1015h6.500v10h-6.500zM1155 1045h6.500v10h-6.500zM1165 1077h6.500v10h-6.500zM1185 1106h6.500v10h-6.500z"/>
        <path fill="#000" d="M196 969h4v6h-4zM216 967h4v6h-4zM230 976h4v6h-4zM231 987h4v6h-4zM255 994h4v6h-4zM298 992h4v6h-4zM330 989h4v6h-4zM331 1005h4v6h-4zM361 1007h4v6h-4zM372 1011h4v6h-4zM381 1023h4v6h-4zM415 1005h4v6h-4zM427 1032h4v6h-4zM440 1034h4v6h-4zM458 1040h4v6h-4zM485 1047h4v6h-4zM505 1032h4v6h-4zM507 1042h4v6h-4zM525 1065h4v6h-4zM586 1074h4v6h-4zM603 1075h4v6h-4zM642 1087h4v6h-4zM681 1080h4v6h-4zM707 1065h4v6h-4zM739 1037h4v6h-4zM795 971h4v6h-4zM821 955h4v6h-4zM851 929h4v6h-4zM863 924h4v6h-4zM838 907h4v6h-4zM860 870h4v6h-4zM861 883h4v6h-4zM855 835h4v6h-4zM874 824h4v6h-4zM878 800h4v6h-4zM881 777h4v6h-4zM868 759h4v6h-4zM885 739h4v6h-4zM887 719h4v6h-4zM870 701h4v6h-4zM876 686h4v6h-4zM874 661h4v6h-4zM891 643h4v6h-4zM916 634h4v6h-4zM937 633h4v6h-4zM967 639h4v6h-4zM758 774h4v6h-4zM1085 755h4v6h-4zM1091 812h4v6h-4zM1092 824h4v6h-4zM1087 847h4v6h-4zM1105 874h4v6h-4zM1113 886h4v6h-4zM1128 944h4v6h-4zM1116 987h4v6h-4zM1143 1015h4v6h-4zM1152 1044h4v6h-4zM1171 1064h4v6h-4zM1193 1087h4v6h-4zM1203 1117h4v6h-4z"/>
        <polygon points="1040,103 1032,862 930,1262 950,750 1018,405 1022,240" fill="#381d00"/>
        <polygon points="1020,250 1018,405 975,612 957,610 968,530" fill="#c46200"/>
        <polygon points="1040,103 1074,113 1074,872 1032,862" fill="#c46200"/>
        <polygon points="1032,862 1074,872 972,1272 930,1262" fill="#964e00"/>
        <polygon points="1333,548 1416,570 1444,777 1442,782 1354,757" fill="#c6c6c6"/>
        <path d="M1333 548L1354 757" stroke="#444" stroke-width="2" fill="none"/>
        <g transform="translate(1045.33 866.500) scale(.43556 .6877)">
          <path d="M360 425L410 365 497 270 540 208 610 190 612 320 722 335 700 352 640 440 655 590 610 655 400 622 375 590z" fill="#f6f6f6"/>
          <path d="M362 425L385 590 410 620 600 652" fill="none" stroke="#bdbdbd" stroke-width="8"/>
          <polygon points="535,212 575,202 560,315 535,300" fill="#c4c4c4"/>
          <polygon points="582,228 612,226 612,280 700,305 690,318 620,312 582,290" fill="#0000d0"/>
          <g id="arm">
            <polygon points="405,428 450,362 488,300 508,262 542,285 525,335 505,352 485,422 458,468 410,460" fill="#0000d8"/>
            <polygon points="405,428 450,362 482,325 476,405 445,468 410,460" fill="#00009a"/>
            <polygon points="515,335 588,350 565,428 490,415" fill="url(#cyl)"/>
            <polygon points="586,350 600,362 574,430 553,442 568,420" fill="#0000d8"/>
            <polygon points="462,425 535,440 522,466 492,472 474,538 446,522 442,490" fill="#00bb00"/>
            <polygon points="472,480 510,488 558,505 550,538 498,546 466,525" fill="#9a9a9a"/>
            <path d="M505 525L540 525M535 505L530 525" stroke="#c00000" stroke-width="6" fill="none"/>
            <polygon points="530,488 555,488 558,505 530,505" fill="#00bb00"/>
          </g>
          <use href="#arm" x="148" y="28"/>
          <polygon points="608,180 732,195 745,275 720,295 632,285 612,262" fill="#00bb00"/>
          <polygon points="612,262 745,275 720,295 632,285" fill="#008a00"/>
          <polygon points="605,312 680,322 672,365 596,352" fill="#e00000"/>
          <polygon points="600,332 675,342 672,365 596,352" fill="#a80000"/>
          <polygon points="775,195 995,230 1082,650 838,615" fill="#c6c6c6"/>
          <polygon points="838,615 1082,650 1082,660 838,625" fill="#a4a4a4"/>
          <path d="M770 195L838 615" stroke="#444" stroke-width="6" fill="none"/>
          <polygon points="745,720 830,615 850,625 770,725" fill="#9b0000"/>
          <polygon points="910,745 1005,650 1030,652 935,748" fill="#9b0000"/>
          <polygon points="935,390 955,392 968,458 938,470" fill="#00bb00"/>
          <polygon points="912,418 935,390 938,470 925,483" fill="#005a00"/>
          <polygon points="938,470 968,458 925,483" fill="#00bb00"/>
        </g>
      </svg>
    </div>
    <div class="r-rp">
      <div class="r-tools">
        <span class="rt"><svg viewBox="0 0 24 24"><path d="M3 3l18 8-6 2 6 6-3 3-6-6-2 6z" fill="#f03030" stroke="#000"/></svg></span>
        <span class="rt rt-on"><svg viewBox="0 0 24 24"><path d="M8 22c-3-3-6-6-6-8 1-1 3 0 4 2V6h2v-3h2v-1h2v1h2v2h2v13l-2 4z" fill="#fff" stroke="#000"/><path d="M10 12v5M12 12v5M14 12v5" stroke="#888"/></svg></span>
        <span class="rt"><svg viewBox="0 0 24 24"><path d="M5 13h15v8H5z" fill="#fff" stroke="#000"/><path d="M1 13L11 3l11 9z" fill="#000"/><path d="M8 15h3v6H8z" fill="#888"/></svg></span>
        <span class="rt rt-blue"><svg viewBox="0 0 24 24"><path d="M5 1h18v22H1V5z" fill="#3a96f0" stroke="#000"/><path d="M4 14L12 7l8 7M6 13v7h12v-7M12 9v11M6 15h12" fill="none" stroke="#a5d0f5"/></svg></span>
        <span class="rt"><svg viewBox="0 0 24 24"><path d="M4 1h18v22H2V4z" fill="#e8d820" stroke="#000"/><path d="M1 13c4-6 18-8 22 0-4 6-18 6-22 0z" fill="#fff" stroke="#000"/><circle cx="13" cy="12" r="6" fill="#1a56c8"/><circle cx="14" cy="12" r="3" fill="#000"/></svg></span>
        <span class="rt"><svg viewBox="0 0 24 24"><path d="M20 2l3 3-9 11-5-5z" fill="#1a60d8" stroke="#000"/><path d="M9 11l5 5-3 5-7-7z" fill="#1a60d8" stroke="#000"/><path d="M4 14l7 7-3 1-5-5z" fill="#ecec20" stroke="#000"/></svg></span>
        <span class="rt"><svg viewBox="0 0 24 24"><path d="M13 4l7 3v10l-5 4-10-6-1-4z" fill="#d02020"/><path d="M4 11l9-7 2 17-10-6z" fill="#f0e020"/><path d="M14 13l6-6v10l-5 4z" fill="#3a7a20"/></svg></span>
      </div>
      <svg class="w-v"><use href="#wheel"/></svg>
    </div>
  </div>
  <div class="r-labels">
    <span class="rl-x">RotX</span><span class="rl-y">RotY</span>
    <span class="w-h"><svg class="w-hs"><use href="#wheel"/></svg></span>
    <span class="rl-d">Dolly</span>
  </div>
  <div class="r-status">Status Bar</div>
</section>
</body>
</html>
```

FILE: styles.css
```css
*{box-sizing:border-box}
html,body{margin:0;padding:0}
body{width:3840px;height:1080px;overflow:hidden;display:flex;font-family:"Noto Sans",sans-serif;background:#fff}
i,em{font-style:normal}
.defs{position:absolute;width:0;height:0}
svg{display:block;flex:none;fill:currentColor}

.screen{width:1920px;height:1080px;display:flex;flex-direction:column}
.panel{height:27px;flex:none;display:flex;align-items:center;background:linear-gradient(#57544b,#3d3c37);color:#e8e6e0;font-size:13.500px;font-weight:500}
.p-activities{margin-left:13px;width:88px}
.p-vs{width:15px;height:16px;margin-right:6px}
.p-app{width:140px;white-space:nowrap}
.ic14{width:14px;height:14px;margin-left:2px}
.p-clock{margin-left:639px;width:78.500px}
.p-date{width:80px;margin-right:627.500px}
.p-discord{position:relative;width:24px;height:24px;color:#f2f2f2;margin-right:23px}
.ic24{width:24px;height:24px}
.p-red{position:absolute;right:2px;top:2px;width:7px;height:7px;border-radius:50%;background:#f04040}
.p-ime{font-family:"Noto Sans CJK SC",sans-serif;font-size:15px;width:17px}
.p-tray{height:16px;width:16px;color:#d8d6d0}
.p-wifi{margin-left:30px}
.p-vol{margin-left:12px}
.p-bat{margin-left:12px;height:20px}
.p-bat + .p-c{margin-left:8px}

.desk{flex:1;display:flex;min-height:0}
.dock{width:67px;flex:none;background:#4a3137;display:flex;flex-direction:column}
.app{height:64px;flex:none;position:relative;display:flex;align-items:center;justify-content:center}
.app svg{width:46px;height:46px;margin-left:0}
.app-on{background:#6b5459;border-radius:4px;margin:1px 3px 1px 2px;height:62px}
.dots{position:absolute;left:2px;top:50%;transform:translateY(-50%);display:flex;flex-direction:column;gap:3px}
.dots b{display:block;width:6px;height:6px;border-radius:50%;background:#e95420}
.app-on .dots{left:0}
.badge{position:absolute;left:43px;top:-3px;width:19px;height:19px;border-radius:50%;background:#f00;color:#fff;font:700 11px/19px "Noto Sans",sans-serif;text-align:center}
.ap-a{font:700 24px "Liberation Sans",sans-serif;fill:#fff;text-anchor:middle}
.ap-q{font:700 30px "Liberation Sans",sans-serif;fill:#fff;text-anchor:middle}
.app .ap-w{color:#fff}

.ff{flex:1;min-width:0;display:flex;flex-direction:column}
.tabs{height:38px;flex:none;background:#3d3c38;padding-top:5px;display:flex;border-bottom:1px solid #2c2b28}
.tab{width:214.300px;height:32px;display:flex;align-items:center;padding-left:9px;color:#dedbd5;font-size:14px;border-right:1px solid #5c5a54}
.tab-on{height:33px;background:#f5f4f2;border-top:2px solid #e9663c;border-right:0;color:#4a4a48}
.fav{width:15px;height:15px;margin-right:8px}
.fav-t{font:700 5px "Liberation Sans",sans-serif;fill:#fff;text-anchor:middle}
.t{flex:1;min-width:0;white-space:nowrap;overflow:hidden;-webkit-mask-image:linear-gradient(to right,#000 84%,transparent 100%);mask-image:linear-gradient(to right,#000 84%,transparent 100%)}
.cl{width:16px;height:16px;margin:0 9px 0 2px}
.newtab{font-size:28px;font-weight:300;color:#dedbd5;line-height:30px;margin-left:9px;width:20px;text-align:center}
.wbtns{display:flex;gap:3px;margin-left:auto;margin-right:7px;align-items:center;height:24px;margin-top:1px}
.wb{width:17px;height:17px;border-radius:50%;background:#6a6963;display:flex;align-items:center;justify-content:center}
.wb-m{background:#6a6963}
.wb-x svg{width:12px;height:12px;color:#3d3c38}

.navbar{height:41px;flex:none;background:#f5f4f2;border-bottom:2px solid #ceccc9;display:flex;align-items:center;color:#5a5a58}
.back{width:34px;height:34px;margin-left:3px;border-radius:50%;border:1px solid #d6d5d2;display:flex;align-items:center;justify-content:center;color:#a8a8a6}
.back svg{width:20px;height:20px}
.nb{width:18px;height:18px}
.nb-fw{margin-left:7px;color:#a8a8a6}
.nb-rl{margin-left:15px}
.nb-hm{margin-left:14px}
.url{width:1313px;height:30px;margin-left:124px;background:#fff;border:1px solid #d0cecb;border-radius:4px;display:flex;align-items:center;color:#777}
.u-sh{width:14px;height:14px;margin-left:7px}
.u-sep{width:1px;height:24px;background:#d8d6d3;margin:0 6px 0 8px}
.u-lk{width:14px;height:14px;color:#6a6a68}
.u-t{margin-left:8px;font-size:15.200px;white-space:nowrap;color:#8a8a88;width:1154px}
.u-t b{font-weight:400;color:#333}
.u-dots{font-size:8px;letter-spacing:.5px;color:#666;width:22px;margin-left:17px}
.u-pk{width:16px;height:16px;margin-left:2px}
.u-st{width:20px;height:20px;margin-left:8px}
.nb-dl{width:16px;height:19px;color:#0a84ff;margin-left:126px}
.nb2{width:18px;height:18px;margin-left:14px}
.nb-sep{width:1px;height:30px;background:#d8d6d3;margin-left:11px}
.nb-mn{width:14px;height:14px;margin-left:14px}

.docs{flex:1;min-height:0;display:flex;flex-direction:column;background:#fff}
.dhead{height:65px;flex:none;border-bottom:2px solid #e0e0e0;display:flex;align-items:flex-start;padding:14px 20px 0 23px}
.dlogo{width:26px;height:36px;margin-right:22px;flex:none}
.dinfo{display:flex;flex-direction:column}
.dtitle{display:flex;align-items:center;height:20px;font-family:Roboto,sans-serif;font-size:18px;color:#202124;margin-top:-2px}
.dname{width:116px;white-space:nowrap}
.dt-i{width:19px;height:19px;color:#5f6368;margin-right:10px}
.dmenu{display:flex;font-family:Roboto,sans-serif;font-size:14px;color:#3c4043;margin-top:12px;height:20px;align-items:center;margin-left:-1px;white-space:nowrap}
.dmenu span{margin-right:15px}
.dlast{color:#5f6368;text-decoration:underline;margin-left:9px}
.dright{margin-left:auto;display:flex;align-items:center;margin-top:0;height:36px}
.dpres{width:36px;height:36px;border-radius:50%;border:2px solid #e2e2e2;display:flex;align-items:center;justify-content:center;color:#5f6368}
.dpres svg{width:20px;height:20px}
.d-tr{width:24px;height:24px;color:#444;margin-left:16px}
.d-cm{width:22px;height:24px;color:#5f6368;margin-left:29px}
.share{width:88px;height:36px;margin-left:19px;background:#1a73e8;color:#fff;border-radius:4px;display:flex;align-items:center;font:500 14px Roboto,sans-serif;padding-left:9px;gap:3px}
.share svg{width:20px;height:20px}
.avatar{width:32px;height:32px;margin-left:20px}

.dbody{flex:1;min-height:0;display:flex}
.dmain{flex:1;min-width:0;display:flex;flex-direction:column}
.side{width:56px;flex:none;border-left:2px solid #dadce0;position:relative;display:flex;flex-direction:column;align-items:center;padding-top:19px;margin-top:-1px}
.s-i{width:20px;height:20px;margin-bottom:36px}
.s-31{font:700 7.500px Roboto,sans-serif;fill:#4285f4;text-anchor:middle}
.s-div{width:20px;height:1px;background:#dadce0;margin-top:-2px}
.s-plus{font:300 26px/26px Roboto,sans-serif;color:#70757a;margin-top:32px}
.s-ch{position:absolute;left:22px;bottom:20px;width:10px;height:14px}

.tb{height:40px;flex:none;border-bottom:2px solid #e0e0e0;display:flex;align-items:center;padding-left:21px;color:#444746;font-family:Roboto,sans-serif;font-size:13px}
.tb svg{width:18px;height:18px}
.tb-btn{width:28px;display:flex;justify-content:center}
.tb-btn2{width:29px;display:flex;justify-content:center}
.tb-btn3{width:20px;display:flex;justify-content:center;margin-left:8px}
.tb-btn3 + .sep{margin-left:7px}
.tb-n{width:28px}
.ml3{margin-left:3px}
.tb-mute{color:#c8cacc}
.sep{width:1px;height:24px;background:#dadce0;flex:none;margin-left:4px}
.sep-a{margin-left:5px}
.sel{display:flex;align-items:center;justify-content:space-between;padding:0 0 0 15px;white-space:nowrap;height:24px;color:#444746}
.tb .sel svg,.tb .cr{width:16px;height:16px}
.sel-z{width:69px}
.sel-s{width:109px}
.sel-f{width:104px;padding-right:0}
.fsize{width:89px;height:25px;margin-left:10px;border:1px solid #dadce0;border-radius:3px;display:flex;align-items:center;flex:none}
.fsize b{width:25px;text-align:center;font-weight:500;font-size:16px;height:100%;line-height:22px}
.fsize em{width:39px;text-align:center;font-size:14px;border:solid #dadce0;border-width:0 1px;height:100%;line-height:23px}
.tb-l{width:29px;text-align:center;font:700 20px/24px "Liberation Sans",sans-serif;transform:scaleX(.85);color:#5f6368}
.tb-b{margin-left:3px}
.tb-i{font-style:italic;font-family:"Liberation Serif",serif}
.tb-u{font-weight:400;text-decoration:underline}
.tb-c{font-weight:400;border-bottom:4px solid #000;width:22px;margin:0 3px;line-height:22px;height:26px}
.tb-img{width:38px;display:flex;align-items:center;margin-left:1px;padding-left:3px}
.tb-img .cr{margin-left:-1px}
.tb-on{width:26px;height:26px;background:#e8f0fe;color:#1a73e8;border-radius:3px;margin-left:6px;display:flex;align-items:center;justify-content:center}
.tb-lst{width:46px;display:flex;align-items:center;padding-left:11px}
.tb-lst .cr{margin-left:4px}
.tb-lst + .tb-btn2{margin-left:5px}
.mode{display:flex;align-items:center;margin-left:470px;width:124px;font-size:14px;color:#5f6368;flex:none}
.mode span{margin:0 0 0 6px;width:84px}
.eq{height:38px;flex:none;display:flex;align-items:center;padding-left:28px;position:relative}
.eq-new{font:500 12px Roboto,sans-serif;color:#444746;width:87px;white-space:nowrap}
.eq-g{display:flex;align-items:center;font:11.500px "DejaVu Sans",sans-serif;color:#a9abad;width:46px;white-space:nowrap}
.eq-g svg{width:13px;height:13px;margin-left:2px}
.eq-x{position:absolute;right:7px;top:8px;width:22px;height:22px;color:#5f6368}
.ruler{height:14px;flex:none;position:relative;background:linear-gradient(to right,#e8eaed 374px,#fff 374px,#fff 1383px,#e8eaed 1383px);box-shadow:0 2px 3px rgba(0,0,0,.14);z-index:1}
.r-ticks{position:absolute;left:268px;width:1226px;top:0;height:14px;background:repeating-linear-gradient(to right,transparent 0 35px,#aaa 35px 36px,transparent 36px 71px,#aaa 71px 72px) 0 3px/100% 9px no-repeat,repeating-linear-gradient(to right,#b8b8b8 0 1px,transparent 1px 18px) 0 5px/100% 4px no-repeat}
.r-nums{position:absolute;left:448px;top:0;display:flex;font:11px/14px Roboto,sans-serif;color:#444}
.r-nums span{width:144px;text-align:center}
.r-m{position:absolute;top:4px;border:solid transparent;border-width:8px 5.500px 0;border-top-color:#4285f4;width:0;height:0}
.r-m1{left:369px}
.r-m1::before{content:"";position:absolute;left:-5.500px;top:-12px;width:11px;height:5px;background:#4285f4}
.r-m2{left:1378px}

.work{flex:1;min-height:0;position:relative;display:flex;background:#f8f9fa;overflow:hidden}
.vr{width:14px;flex:none;background-color:#fff;border-right:1px solid #dadce0;padding-top:70px;background-image:repeating-linear-gradient(to bottom,#aaa 0 1px,transparent 1px 72px),repeating-linear-gradient(to bottom,#aaa 0 1px,transparent 1px 18px);background-size:8px 100%,4px 100%;background-position:3px 70px,5px 16px;background-repeat:no-repeat;display:flex;flex-direction:column;align-items:center}
.vr span{height:144px;flex:none;display:flex;align-items:center;writing-mode:vertical-rl;font:11px/14px Roboto,sans-serif;color:#444;background:linear-gradient(#fff,#fff) center/14px 14px no-repeat;width:13px;justify-content:center}
.outline{width:60px;flex:none;padding:32px 0 0 21px;color:#9aa0a6}
.outline svg{width:18px;height:18px}
.ogrip{width:5px;height:763px;background:#bdbdbd;flex:none}
.page{width:1224px;margin-left:191px;background:#fff;border:solid #dadce0;border-width:0 1px;flex:none}
.sbar{position:absolute;right:0;top:537px;width:5px;height:49px;background:#c1c1c1}
.fab{position:absolute;right:12px;bottom:8px;width:37px;height:37px;background:#fff;border-radius:2px;box-shadow:0 0 3px rgba(0,0,0,.35);display:flex;align-items:center;justify-content:center;color:#5f6368}
.fab svg{width:18px;height:20px}

.rave{width:1920px;height:1080px;display:flex;flex-direction:column;background:#f1f0ee;font-size:14px;color:#3c3c3c}
.r-title{height:28px;flex:none;background:linear-gradient(#3c3b37,#504e47);color:#e8e6e0;font-weight:700;font-size:13.500px;line-height:28px;text-align:center}
.r-menu{height:25px;flex:none;background:#3c3b37;color:#dfdbd2;display:flex;align-items:center;padding-left:13px;font-size:13.500px}
.r-menu span{margin-right:21px}
.r-menu u{text-underline-offset:2px}
.r-main{flex:1;min-height:0;display:flex}
.r-lp{width:30px;flex:none;display:flex;flex-direction:column;justify-content:flex-end;padding:0 0 2px 8px}
.w-v{width:14px;height:118px}
.view{flex:1;min-width:0;background:#fff;position:relative;overflow:hidden}
.scene{position:absolute;left:210px;top:147px;width:1200px;height:760px}
.r-rp{width:30px;flex:none;display:flex;flex-direction:column;justify-content:space-between;padding:1px 0 2px 1px}
.r-rp > .w-v{margin-left:7px}
.r-tools{display:flex;flex-direction:column;gap:2px}
.rt{width:28px;height:28px;border:1px solid #cfcdca;border-radius:4px;background:#f6f5f4;display:flex;align-items:center;justify-content:center}
.rt svg{width:22px;height:22px}
.rt-on{background:#dad8d5}
.rt-blue svg{width:24px;height:24px}
.r-labels{height:31px;flex:none;display:flex;align-items:center;padding:0 0 1px 2px;border-bottom:1px solid #d5d3cf;color:#4d5560;font-size:13.500px}
.rl-x{width:46px}
.rl-y{width:43px}
.w-h{width:118px;height:14px;position:relative;display:block}
.w-hs{position:absolute;left:52px;top:-52px;width:14px;height:118px;transform:rotate(-90deg)}
.rl-d{margin-left:auto;margin-right:2px}
.r-status{height:21px;flex:none;padding-left:6px;line-height:20px;font-size:13.500px;color:#4d5560}
```
